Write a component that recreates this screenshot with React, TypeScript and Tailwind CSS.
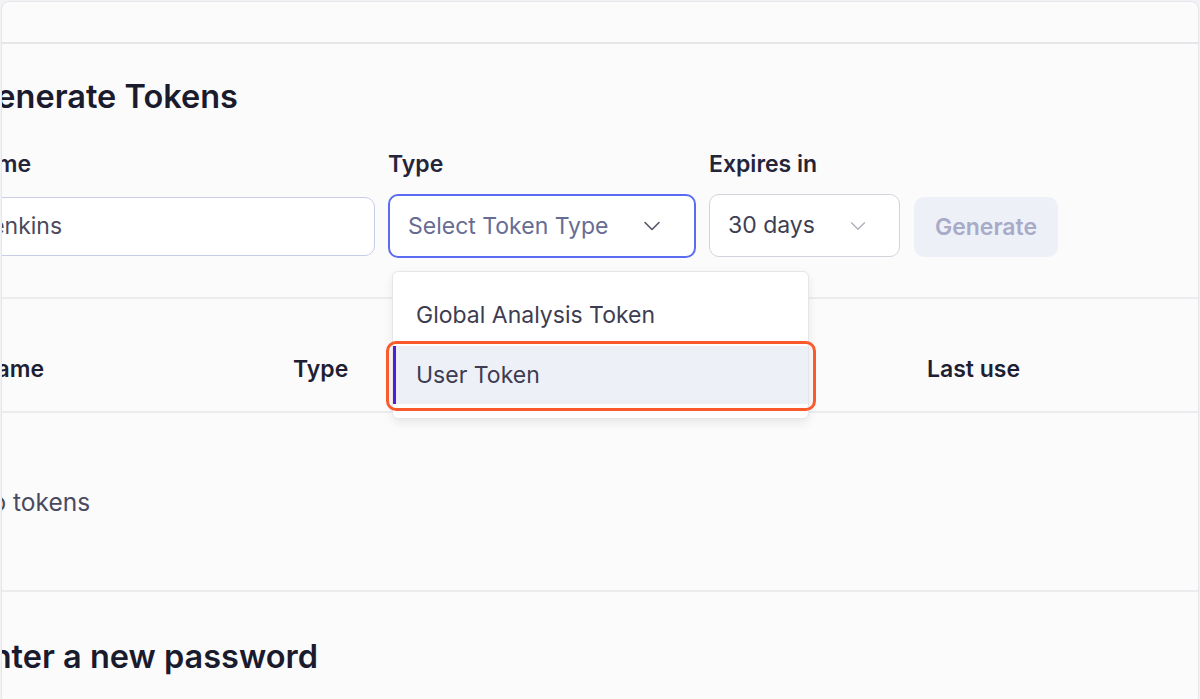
import { ChevronDown } from "lucide-react";

const font = { fontFamily: "Inter, 'Noto Sans', sans-serif" };

function Field({
  label,
  width,
  children,
}: {
  label: string;
  width: string;
  children: React.ReactNode;
}) {
  return (
    <div className={`flex flex-col ${width}`}>
      <div className="h-[28px] text-[23px] leading-[28px] font-semibold text-[#25253a]">
        {label}
      </div>
      <div className="h-[80px] flex items-end">{children}</div>
    </div>
  );
}

export default function App() {
  return (
    <div
      className="w-[1200px] h-[699px] overflow-hidden bg-[#f3f3f6] pl-[1px] pr-[1px] pt-[1px]"
      style={font}
    >
      <div className="relative h-full bg-[#fbfbfc] rounded-t-[8px] border-l border-t border-r border-[#e6e6ea] overflow-hidden">
        {/* top bar */}
        <div className="h-[42px] border-b-2 border-[#e6e6e9]" />

        <div className="-ml-[30px]">
          {/* Generate tokens */}
          <div className="pt-[35px] pb-[39px] border-b-2 border-[#ececef]">
            <h2 className="text-[32.5px] leading-[36px] font-semibold text-[#1b1b2e]">
              Generate Tokens
            </h2>
            <div className="mt-[35px] flex gap-[13px]">
              <div className="-ml-[6px]">
                <Field label="Name" width="w-[409px]">
                  <div className="mb-[2px] w-full h-[59px] rounded-[10px] border border-[#c8cce6] bg-white px-[11px] flex items-center text-[23px] text-[#4a4a5c]">
                    Jenkins
                  </div>
                </Field>
              </div>
              <Field label="Type" width="w-[308px]">
                <div className="w-full h-[64px] rounded-[10px] border-2 border-[#5c6cf2] bg-white pl-[18px] pr-[28px] flex items-center justify-between text-[23px] text-[#676c93]">
                  <span>Select Token Type</span>
                  <ChevronDown size={28} strokeWidth={1.4} className="text-[#55566a]" />
                </div>
              </Field>
              <Field label="Expires in" width="w-[191px]">
                <div className="mb-[1px] w-full h-[63px] rounded-[10px] border border-[#d2d3db] bg-white pl-[18px] pr-[28px] flex items-center justify-between text-[23px] text-[#3e3e52]">
                  <span>30 days</span>
                  <ChevronDown size={26} strokeWidth={1.3} className="text-[#b0b1bd]" />
                </div>
              </Field>
              <div className="flex items-end">
                <button className="mb-[1px] ml-[1px] w-[144px] h-[60px] rounded-[10px] bg-[#eef0f8] text-[23px] font-semibold text-[#a8abc7]">
                  Generate
                </button>
              </div>
            </div>
          </div>

          {/* Tokens table */}
          <div className="h-[114px] pt-[28px] flex items-center border-b-2 border-[#ececef] text-[23px] font-semibold text-[#1f1f33]">
            <div className="w-[321px] pl-[7px]">Name</div>
            <div className="w-[634px]">Type</div>
            <div>Last use</div>
          </div>
          <div className="pl-[1px] pt-[75px] pb-[74px] border-b-2 border-[#ececef] text-[24.5px] leading-[28px] text-[#4a4a5e]">
            No tokens
          </div>

          {/* Password */}
          <div className="pt-[47px]">
            <h2 className="text-[32.5px] leading-[36px] font-semibold text-[#1b1b2e]">
              Enter a new password
            </h2>
          </div>
        </div>

        {/* dropdown menu */}
        <div className="absolute left-[390px] top-[269px] w-[417px] rounded-[6px] bg-white border border-[#e6e6ea] shadow-[0_4px_10px_rgba(0,0,0,0.08)] py-[14px]">
          <div className="h-[58px] pl-[23px] flex items-center text-[23px] text-[#3d3d52]">
            Global Analysis Token
          </div>
          <div className="mt-[2px] h-[58px] pl-[20px] flex items-center text-[23px] text-[#3d3d52] bg-[#eef0f8] border-l-[3px] border-[#4f1ed8]">
            User Token
          </div>
        </div>

        {/* highlight */}
        <div className="absolute left-[384px] top-[339px] w-[430px] h-[70px] rounded-[10px] border-[3px] border-[#fb5b2c]" />
      </div>
    </div>
  );
}
